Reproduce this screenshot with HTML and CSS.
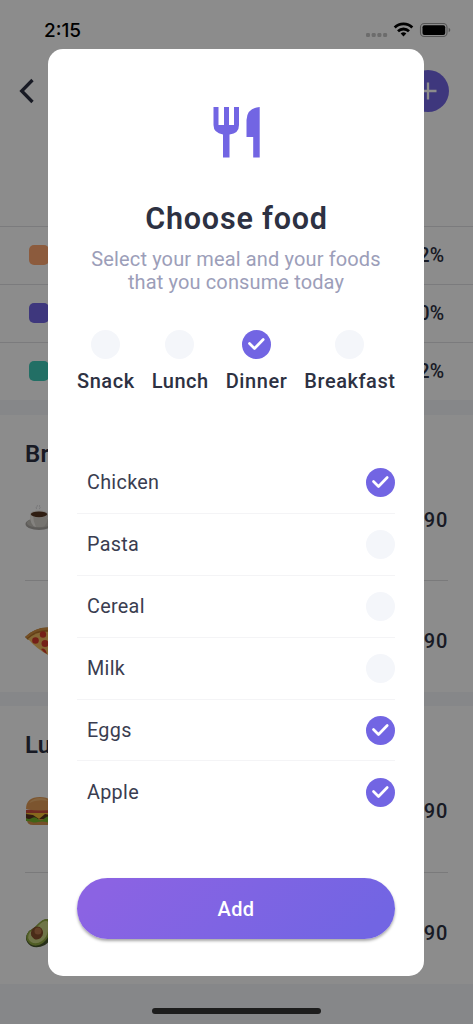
FILE: index.html
```html
<!DOCTYPE html>
<html lang="en">
<head>
<meta charset="utf-8">
<meta name="viewport" content="width=device-width">
<title>Choose food</title>
<link rel="stylesheet" href="styles.css">
</head>
<body>
<div class="page">
  <header class="nav">
    <svg class="back" width="16" height="26" viewBox="0 0 16 26"><path d="M13.500 2 2.700 13l10.800 11" fill="none" stroke="#2d3142" stroke-width="3.300"/></svg>
    <svg class="plus" width="42" height="42" viewBox="0 0 42 42"><circle cx="21" cy="21" r="21" fill="#7265e3"/><path d="M21 12.500v17M12.500 21h17" stroke="#fff" stroke-width="2.300"/></svg>
  </header>
  <div class="stat"><i class="swatch orange"></i><b>22%</b></div>
  <div class="stat"><i class="swatch purple"></i><b>50%</b></div>
  <div class="stat"><i class="swatch teal"></i><b>12%</b></div>
  <section class="meal">
    <h2>Breakfast</h2>
    <div class="entry">
      <svg width="28" height="32" viewBox="0 0 28 32"><path d="M12 5c-3-2 2-2 0-4M14 5c3-2-1-2 1-4" fill="none" stroke="#c8c8cc" stroke-width=".7"/><ellipse cx="14" cy="20" rx="13.500" ry="6" fill="#aaa7a2"/><ellipse cx="14" cy="19" rx="12" ry="4.500" fill="#c5c2bb"/><path d="M5 10q0 12 6 13h6q6-1 6-13z" fill="#d6d1ca"/><path d="M5 10q0 12 6 13-3-6-3-13z" fill="#f0ede8"/><ellipse cx="14" cy="10" rx="9" ry="3.500" fill="#e9e5df"/><ellipse cx="14" cy="10.300" rx="8.200" ry="2.900" fill="#56351f"/></svg>
      <b>90</b>
    </div>
    <div class="entry">
      <svg width="30" height="30" viewBox="0 0 30 30"><path d="M0 11Q12-1 29 2v5Q14 7 3 14z" fill="#b5732b"/><path d="M3 13Q12 4 27 6l-4 23Q12 23 3 13z" fill="#f0bc61"/><path d="M0 11Q12-1 29 2v2Q12 2 2 12z" fill="#d49142"/><g fill="#d33b2d"><circle cx="10.500" cy="14.500" r="3.300"/><circle cx="18" cy="8.500" r="3.200"/><circle cx="20" cy="17.500" r="3.500"/><path d="M16 23q4-2 6 5-3-1-6-5z"/></g></svg>
      <b>90</b>
    </div>
  </section>
  <section class="meal second">
    <h2>Lunch</h2>
    <div class="entry">
      <svg width="30" height="30" viewBox="0 0 30 30"><path d="M2 20h26v4q0 5-6 5H8q-6 0-6-5z" fill="#d6914b"/><path d="M1 15h28v8H1z" fill="#5c3420"/><path d="M1 22q3 2 6 0t6 1 7-1 8 1v3q-3 1-7 0t-8 0-6 0-6-1z" fill="#76b72b"/><path d="M2 15h26l-3 4-5-1-6 5-6-4-7-1z" fill="#f6bd36"/><path d="M1 14q14-3 28 0v3H1z" fill="#cd4e3c"/><path d="M1 13Q1 1 15 1t14 12q-12 3-28 0z" fill="#e29c57"/><path d="M4 7q4-5 11-5 6 0 8 3Q12 3 4 7z" fill="#efb573"/></svg>
      <b>90</b>
    </div>
    <div class="entry">
      <svg width="30" height="30" viewBox="0 0 30 30"><path d="M4 13C13 9 15 1 24 1q6 2 4 13-2 9-8 13-8 4-14 1Q-3 22 4 13z" fill="#46552a"/><path d="M4 13C12 9 15 1 22 1q7 2 3 12-1 7-7 12-7 5-13 1Q-2 20 4 13z" fill="#91a943"/><path d="M5 14C13 10 16 2 22 3q5 3 1 10-1 6-6 10-6 4-11 1-5-4-1-10z" fill="#cbd684"/><ellipse cx="12" cy="15" rx="6" ry="6.500" fill="#87502c" transform="rotate(25 12 15)"/><ellipse cx="13" cy="13" rx="3.500" ry="3.500" fill="#b7774b"/></svg>
      <b>90</b>
    </div>
  </section>
</div>

<div class="scrim">
  <div class="status">
    <span>2:15</span>
    <svg width="86" height="18" viewBox="0 0 86 18">
      <g fill="#6c6c6c"><rect x="0" y="12" width="4" height="4" rx="1.300"/><rect x="5.700" y="12" width="4" height="4" rx="1.300"/><rect x="11.400" y="12" width="4" height="4" rx="1.300"/><rect x="17.100" y="12" width="4" height="4" rx="1.300"/></g>
      <g fill="none" stroke="#000" stroke-width="2.800"><path d="M28.700 6.500a12.600 12.600 0 0 1 17.600 0"/><path d="M32 10.200a8 8 0 0 1 11 0"/></g><path d="M34.700 12.500a4.100 4.100 0 0 1 5.600 0l-2.800 2.900z"/>
      <rect x="54.500" y="2.500" width="26.500" height="13" rx="3.800" fill="none" stroke="#555" stroke-width="1.100"/><rect x="56.500" y="4.300" width="22.700" height="9.600" rx="1.900"/><path d="M82.700 6.700q3.200 2.200 0 4.600z" fill="#555"/>
    </svg>
  </div>
  <main class="dialog">
    <svg class="utensils" width="48" height="52" viewBox="0 0 48 52" fill="#7265e3"><path d="M.5 1h5v18H11V1h5v18h5V1h5v18q0 8.500-9.500 9.500v23H10v-23Q.5 27 .5 19z"/><path d="M33.500 31V14Q34 2 46.700 1v50.500h-6.500V31z"/></svg>
    <h1>Choose food</h1>
    <p class="lead">Select your meal and your foods<br>that you consume today</p>
    <div class="meals">
      <div class="choice"><i class="check"></i><b>Snack</b></div>
      <div class="choice"><i class="check"></i><b>Lunch</b></div>
      <div class="choice"><i class="check on"><svg viewBox="0 0 29 29"><path d="m7.500 13.500 5 5 8.700-9"/></svg></i><b>Dinner</b></div>
      <div class="choice"><i class="check"></i><b>Breakfast</b></div>
    </div>
    <ul class="foods">
      <li><span>Chicken</span><i class="check on"><svg viewBox="0 0 29 29"><path d="m7.500 13.500 5 5 8.700-9"/></svg></i></li>
      <li><span>Pasta</span><i class="check"></i></li>
      <li><span>Cereal</span><i class="check"></i></li>
      <li><span>Milk</span><i class="check"></i></li>
      <li><span>Eggs</span><i class="check on"><svg viewBox="0 0 29 29"><path d="m7.500 13.500 5 5 8.700-9"/></svg></i></li>
      <li><span>Apple</span><i class="check on"><svg viewBox="0 0 29 29"><path d="m7.500 13.500 5 5 8.700-9"/></svg></i></li>
    </ul>
    <button class="add">Add</button>
  </main>
  <div class="home"></div>
</div>
</body>
</html>
```
FILE: styles.css
```css
* { box-sizing: border-box; }
body { margin: 0; height: 1024px; overflow: hidden; position: relative; font-family: Roboto, "Open Sans", sans-serif; color: #2d3142; background: #f4f6fa; }
svg { display: block; flex: none; }
b { font-weight: 550; }
h1, h2, p, ul { margin: 0; padding: 0; }

.page { height: 1024px; }
.nav { height: 225.500px; background: #fff; padding: 70px 24px 0 19px; display: flex; justify-content: space-between; }
.back { margin-top: 8px; }
.stat { height: 58.200px; background: #fff; border-top: 1.500px solid #e1e1e3; display: flex; align-items: center; justify-content: space-between; padding: 0 29px; font-size: 19.500px; }
.swatch { width: 20px; height: 20px; border-radius: 5px; }
.orange { background: #ffa770; }
.purple { background: #7265e3; }
.teal { background: #3ecbb8; }
.meal { height: 277.500px; margin-top: 14.500px; background: #fff; padding: 25px 25px 0; overflow: hidden; }
.meal.second { margin-top: 14px; }
.meal h2 { font-size: 24px; line-height: 28px; height: 19.500px; font-weight: 600; letter-spacing: .2px; }
.entry { height: 121px; display: flex; align-items: center; justify-content: space-between; font-size: 20px; letter-spacing: .7px; }
.entry + .entry { border-top: 1.500px solid #dedee1; }

.scrim { position: absolute; inset: 0; background: rgba(0, 0, 0, .45); display: flex; flex-direction: column; align-items: center; }
.status { width: 100%; height: 48.500px; flex: none; padding: 21px 21px 0 44px; display: flex; justify-content: space-between; color: #000; font: 550 19px/20px Inter, sans-serif; }
.dialog { width: 376px; height: 927px; flex: none; margin-right: 1px; background: #fff; border-radius: 15px; padding: 57.500px 29px 0; display: flex; flex-direction: column; align-items: center; }
.utensils { margin-left: 2px; }
h1 { margin-top: 43px; font-size: 30.500px; line-height: 36px; font-weight: 600; letter-spacing: .8px; margin-right: -1px; }
.lead { margin-top: 11px; text-align: center; font-size: 20px; line-height: 23px; letter-spacing: .13px; color: #9c9eb9; white-space: nowrap; }
.meals { width: 318px; margin-top: 36px; display: flex; justify-content: space-between; font-size: 20px; line-height: 24px; letter-spacing: .55px; }
.choice { display: flex; flex-direction: column; align-items: center; gap: 9.500px; }
.choice b { margin-right: -.5px; }
.check { width: 29px; height: 29px; border-radius: 50%; background: #f4f6fa; flex: none; }
.check.on { background: #7265e3; }
.check path { fill: none; stroke: #fff; stroke-width: 2.700; stroke-linecap: round; stroke-linejoin: round; }
.foods { width: 318px; margin-top: 60px; list-style: none; font-size: 19.800px; letter-spacing: .3px; }
.foods li { height: 61.800px; padding-left: 10px; display: flex; align-items: center; justify-content: space-between; border-bottom: 1px solid #f4f4f6; }
.foods li:last-child { border: 0; }
.foods span { color: #3a3d50; }
.add { width: 318px; height: 61px; flex: none; margin-top: 55px; border: 0; border-radius: 31px; background: linear-gradient(135deg, #8b63e3 10%, #7265e3 90%); box-shadow: 0 2px 3px rgba(0, 0, 0, .35); color: #fff; font: 550 20px Roboto, sans-serif; letter-spacing: .4px; }
.home { width: 169px; height: 6px; margin-top: 32.500px; border-radius: 3px; background: #1d1d1d; }
```
